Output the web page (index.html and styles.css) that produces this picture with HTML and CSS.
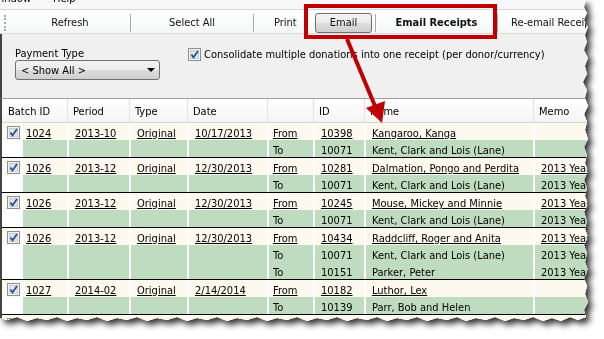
FILE: index.html
```html
<!DOCTYPE html>
<html lang="en">
<head>
    <meta charset="UTF-8">
    <title>Email Receipts</title>
    <link rel="stylesheet" href="styles.css">
</head>
<body>
    <div class="shot">
        <div class="sheet">
            <div class="menubar"><span class="menu-item first">Window</span><span class="menu-item">Help</span></div>

            <div class="toolbar">
                <span class="grip"></span>
                <span class="tool w-refresh">Refresh</span><span class="sep"></span>
                <span class="tool w-select">Select All</span><span class="sep"></span>
                <span class="tool w-print">Print</span>
                <span class="tool-btn">Email</span><span class="sep sep-gap"></span>
                <span class="tool w-receipts">Email Receipts</span><span class="sep"></span>
                <span class="tool w-reemail">Re-email Receipts</span>
            </div>

            <div class="options">
                <div class="filter">
                    <div class="label">Payment Type</div>
                    <div class="select"><span>&lt; Show All &gt;</span><span class="caret"></span></div>
                </div>
                <label class="consolidate">
                    <span class="check"><svg width="13" height="13" viewBox="0 0 13 13"><rect x="0.5" y="0.5" width="12" height="12" fill="#f4f4f4" stroke="#8e8f8f"/><rect x="2.5" y="2.5" width="8" height="8" fill="#dfe6ee" stroke="#c5ccd4"/><path d="M3.5 6.5 L5.5 9.5 L10 3" fill="none" stroke="#2a4f96" stroke-width="1.8"/></svg></span>
                    Consolidate multiple donations into one receipt (per donor/currency)
                </label>
            </div>

            <div class="grid">
                <div class="row head">
                    <div class="cell span2">Batch ID</div>
                    <div class="cell">Period</div>
                    <div class="cell">Type</div>
                    <div class="cell">Date</div>
                    <div class="cell"></div>
                    <div class="cell">ID</div>
                    <div class="cell">Name</div>
                    <div class="cell">Memo</div>
                </div>

                <!-- batch 1024 -->
                <div class="group">
                    <div class="row from">
                        <div class="cell chk"><span class="check"><svg width="13" height="13" viewBox="0 0 13 13"><rect x="0.5" y="0.5" width="12" height="12" fill="#f4f4f4" stroke="#8e8f8f"/><rect x="2.5" y="2.5" width="8" height="8" fill="#dfe6ee" stroke="#c5ccd4"/><path d="M3.5 6.5 L5.5 9.5 L10 3" fill="none" stroke="#2a4f96" stroke-width="1.8"/></svg></span></div>
                        <div class="cell batch"><u>1024</u></div>
                        <div class="cell"><u>2013-10</u></div>
                        <div class="cell"><u>Original</u></div>
                        <div class="cell"><u>10/17/2013</u></div>
                        <div class="cell dir"><u>From</u></div>
                        <div class="cell"><u>10398</u></div>
                        <div class="cell"><u>Kangaroo, Kanga</u></div>
                        <div class="cell"></div>
                    </div>
                    <div class="row to">
                        <div class="cell chk"></div><div class="cell"></div><div class="cell"></div><div class="cell"></div><div class="cell"></div>
                        <div class="cell dir">To</div>
                        <div class="cell">10071</div>
                        <div class="cell">Kent, Clark and Lois (Lane)</div>
                        <div class="cell"></div>
                    </div>
                </div>

                <!-- batch 1026 / Dalmation -->
                <div class="group">
                    <div class="row from">
                        <div class="cell chk"><span class="check"><svg width="13" height="13" viewBox="0 0 13 13"><rect x="0.5" y="0.5" width="12" height="12" fill="#f4f4f4" stroke="#8e8f8f"/><rect x="2.5" y="2.5" width="8" height="8" fill="#dfe6ee" stroke="#c5ccd4"/><path d="M3.5 6.5 L5.5 9.5 L10 3" fill="none" stroke="#2a4f96" stroke-width="1.8"/></svg></span></div>
                        <div class="cell batch"><u>1026</u></div>
                        <div class="cell"><u>2013-12</u></div>
                        <div class="cell"><u>Original</u></div>
                        <div class="cell"><u>12/30/2013</u></div>
                        <div class="cell dir"><u>From</u></div>
                        <div class="cell"><u>10281</u></div>
                        <div class="cell"><u>Dalmation, Pongo and Perdita</u></div>
                        <div class="cell"><u>2013 Year End Receipt</u></div>
                    </div>
                    <div class="row to">
                        <div class="cell chk"></div><div class="cell"></div><div class="cell"></div><div class="cell"></div><div class="cell"></div>
                        <div class="cell dir">To</div>
                        <div class="cell">10071</div>
                        <div class="cell">Kent, Clark and Lois (Lane)</div>
                        <div class="cell">2013 Year End Receipt</div>
                    </div>
                </div>

                <!-- batch 1026 / Mouse -->
                <div class="group">
                    <div class="row from">
                        <div class="cell chk"><span class="check"><svg width="13" height="13" viewBox="0 0 13 13"><rect x="0.5" y="0.5" width="12" height="12" fill="#f4f4f4" stroke="#8e8f8f"/><rect x="2.5" y="2.5" width="8" height="8" fill="#dfe6ee" stroke="#c5ccd4"/><path d="M3.5 6.5 L5.5 9.5 L10 3" fill="none" stroke="#2a4f96" stroke-width="1.8"/></svg></span></div>
                        <div class="cell batch"><u>1026</u></div>
                        <div class="cell"><u>2013-12</u></div>
                        <div class="cell"><u>Original</u></div>
                        <div class="cell"><u>12/30/2013</u></div>
                        <div class="cell dir"><u>From</u></div>
                        <div class="cell"><u>10245</u></div>
                        <div class="cell"><u>Mouse, Mickey and Minnie</u></div>
                        <div class="cell"><u>2013 Year End Receipt</u></div>
                    </div>
                    <div class="row to">
                        <div class="cell chk"></div><div class="cell"></div><div class="cell"></div><div class="cell"></div><div class="cell"></div>
                        <div class="cell dir">To</div>
                        <div class="cell">10071</div>
                        <div class="cell">Kent, Clark and Lois (Lane)</div>
                        <div class="cell">2013 Year End Receipt</div>
                    </div>
                </div>

                <!-- batch 1026 / Raddcliff -->
                <div class="group">
                    <div class="row from">
                        <div class="cell chk"><span class="check"><svg width="13" height="13" viewBox="0 0 13 13"><rect x="0.5" y="0.5" width="12" height="12" fill="#f4f4f4" stroke="#8e8f8f"/><rect x="2.5" y="2.5" width="8" height="8" fill="#dfe6ee" stroke="#c5ccd4"/><path d="M3.5 6.5 L5.5 9.5 L10 3" fill="none" stroke="#2a4f96" stroke-width="1.8"/></svg></span></div>
                        <div class="cell batch"><u>1026</u></div>
                        <div class="cell"><u>2013-12</u></div>
                        <div class="cell"><u>Original</u></div>
                        <div class="cell"><u>12/30/2013</u></div>
                        <div class="cell dir"><u>From</u></div>
                        <div class="cell"><u>10434</u></div>
                        <div class="cell"><u>Raddcliff, Roger and Anita</u></div>
                        <div class="cell"><u>2013 Year End Receipt</u></div>
                    </div>
                    <div class="row to">
                        <div class="cell chk"></div><div class="cell"></div><div class="cell"></div><div class="cell"></div><div class="cell"></div>
                        <div class="cell dir">To</div>
                        <div class="cell">10071</div>
                        <div class="cell">Kent, Clark and Lois (Lane)</div>
                        <div class="cell">2013 Year End Receipt</div>
                    </div>
                    <div class="row to">
                        <div class="cell chk"></div><div class="cell"></div><div class="cell"></div><div class="cell"></div><div class="cell"></div>
                        <div class="cell dir">To</div>
                        <div class="cell">10151</div>
                        <div class="cell">Parker, Peter</div>
                        <div class="cell">2013 Year End Receipt</div>
                    </div>
                </div>

                <!-- batch 1027 / Luthor -->
                <div class="group">
                    <div class="row from">
                        <div class="cell chk"><span class="check"><svg width="13" height="13" viewBox="0 0 13 13"><rect x="0.5" y="0.5" width="12" height="12" fill="#f4f4f4" stroke="#8e8f8f"/><rect x="2.5" y="2.5" width="8" height="8" fill="#dfe6ee" stroke="#c5ccd4"/><path d="M3.5 6.5 L5.5 9.5 L10 3" fill="none" stroke="#2a4f96" stroke-width="1.8"/></svg></span></div>
                        <div class="cell batch"><u>1027</u></div>
                        <div class="cell"><u>2014-02</u></div>
                        <div class="cell"><u>Original</u></div>
                        <div class="cell"><u>2/14/2014</u></div>
                        <div class="cell dir"><u>From</u></div>
                        <div class="cell"><u>10182</u></div>
                        <div class="cell"><u>Luthor, Lex</u></div>
                        <div class="cell"></div>
                    </div>
                    <div class="row to">
                        <div class="cell chk"></div><div class="cell"></div><div class="cell"></div><div class="cell"></div><div class="cell"></div>
                        <div class="cell dir">To</div>
                        <div class="cell">10139</div>
                        <div class="cell">Parr, Bob and Helen</div>
                        <div class="cell"></div>
                    </div>
                </div>

                <!-- batch 1027 / Kent (cut off) -->
                <div class="group">
                    <div class="row from">
                        <div class="cell chk"><span class="check"><svg width="13" height="13" viewBox="0 0 13 13"><rect x="0.5" y="0.5" width="12" height="12" fill="#f4f4f4" stroke="#8e8f8f"/><rect x="2.5" y="2.5" width="8" height="8" fill="#dfe6ee" stroke="#c5ccd4"/><path d="M3.5 6.5 L5.5 9.5 L10 3" fill="none" stroke="#2a4f96" stroke-width="1.8"/></svg></span></div>
                        <div class="cell batch"><u>1027</u></div>
                        <div class="cell"><u>2014-02</u></div>
                        <div class="cell"><u>Original</u></div>
                        <div class="cell"><u>2/14/2014</u></div>
                        <div class="cell dir"><u>From</u></div>
                        <div class="cell"><u>10181</u></div>
                        <div class="cell"><u>Kent, Jonathan and Martha</u></div>
                        <div class="cell"></div>
                    </div>
                </div>
            </div>
        </div>

        <!-- annotation -->
        <div class="callout"></div>
        <svg class="arrow" width="604" height="339" viewBox="0 0 604 339">
            <line x1="347" y1="39" x2="375" y2="106" stroke="#c00000" stroke-width="4"/>
            <polygon points="382,123 366,108 385,101" fill="#c00000"/>
        </svg>
    </div>
</body>
</html>
```

FILE: styles.css
```css
/* page */
body {
    margin: 0;
    background: #fff;
    font-family: "DejaVu Sans Condensed", "Liberation Sans", sans-serif;
    font-size: 11px;
    color: #000;
}

.shot {
    position: relative;
    width: 604px;
    height: 339px;
    overflow: hidden;
    filter: drop-shadow(4px 4px 3px rgba(0, 0, 0, 0.8));
}

/* torn screenshot edges */
.sheet {
    width: 592px;
    height: 324px;
    overflow: hidden;
    background: #f0f0f0;
    clip-path: polygon(0 0, 586px 0, 584px 7px, 587px 13px, 584px 20px, 588px 27px, 585px 35px, 587px 42px, 584px 50px, 588px 58px, 585px 66px, 587px 74px, 583px 82px, 587px 90px, 585px 98px, 588px 106px, 584px 114px, 587px 122px, 585px 130px, 588px 139px, 584px 147px, 587px 155px, 585px 163px, 588px 171px, 584px 180px, 587px 188px, 585px 196px, 588px 204px, 584px 212px, 587px 221px, 585px 229px, 588px 237px, 584px 245px, 587px 253px, 585px 262px, 588px 270px, 584px 278px, 587px 286px, 585px 294px, 588px 302px, 584px 310px, 586px 317px, 578px 320px, 570px 317px, 561px 321px, 552px 318px, 543px 321px, 533px 317px, 524px 320px, 514px 318px, 505px 321px, 495px 317px, 486px 320px, 476px 318px, 466px 321px, 457px 317px, 447px 320px, 437px 318px, 427px 321px, 417px 317px, 407px 320px, 397px 318px, 387px 321px, 377px 317px, 367px 320px, 357px 318px, 347px 321px, 337px 317px, 327px 320px, 317px 318px, 307px 321px, 297px 317px, 287px 320px, 277px 318px, 267px 321px, 257px 317px, 247px 320px, 237px 318px, 227px 321px, 217px 317px, 207px 320px, 197px 318px, 187px 321px, 177px 317px, 167px 320px, 157px 318px, 147px 321px, 137px 317px, 127px 320px, 117px 318px, 107px 321px, 97px 317px, 87px 320px, 77px 318px, 67px 321px, 57px 317px, 47px 320px, 37px 318px, 27px 321px, 17px 317px, 7px 320px, 0 318px);
}

/* menu strip, only its lower edge shows */
.menubar {
    height: 9px;
    overflow: hidden;
    background: #f7f8fa;
    white-space: nowrap;
}

.menu-item {
    display: inline-block;
    margin-top: -8px;
    line-height: 13px;
    vertical-align: top;
}

.menu-item.first {
    margin-left: -8px;
    margin-right: 22px;
}

/* toolbar */
.toolbar {
    display: flex;
    align-items: center;
    height: 25px;
    box-sizing: border-box;
    padding: 2px 0 0 4px;
    background: linear-gradient(#ffffff, #f5f6f8);
    border-top: 1px solid #d6d6d6;
    border-bottom: 1px solid #dcdcdc;
    white-space: nowrap;
    color: #111;
}

.toolbar > * {
    flex-shrink: 0;
}

.grip {
    width: 0;
    height: 16px;
    border-left: 2px dotted #a8a8a8;
    margin-right: 4px;
}

.tool {
    text-align: center;
}

.w-refresh { width: 120px; }
.w-select { width: 122px; }
.w-print { width: 61px; padding-left: 20px; text-align: left; box-sizing: border-box; }
.w-receipts { width: 121px; font-weight: bold; }
.w-reemail { padding-left: 13px; }

.sep {
    width: 1px;
    height: 18px;
    background: #a9a9a9;
    box-shadow: 1px 0 0 #fff;
}

.sep-gap {
    margin-left: 3px;
}

.tool-btn {
    width: 57px;
    height: 20px;
    box-sizing: border-box;
    border: 1px solid #707070;
    border-radius: 3px;
    background: linear-gradient(#f2f2f2 0%, #ebebeb 50%, #dddddd 51%, #cfcfcf 100%);
    text-align: center;
    line-height: 18px;
}

/* filter panel */
.options {
    display: flex;
    height: 64px;
    box-sizing: border-box;
    padding: 13px 0 0 13px;
    border-left: 2px solid #454545;
    background: #f0f0f0;
}

.filter {
    width: 145px;
}

.label {
    line-height: 13px;
}

.select {
    display: flex;
    justify-content: space-between;
    align-items: center;
    height: 20px;
    padding: 0 4px 0 5px;
    box-sizing: border-box;
    border: 1px solid #707070;
    border-radius: 3px;
    background: linear-gradient(#f2f2f2 0%, #ebebeb 50%, #dddddd 51%, #cfcfcf 100%);
}

.caret {
    width: 0;
    height: 0;
    border-left: 4px solid transparent;
    border-right: 4px solid transparent;
    border-top: 4px solid #000;
}

.consolidate {
    display: flex;
    align-items: center;
    gap: 3px;
    height: 13px;
    margin: 1px 0 0 28px;
    white-space: nowrap;
}

.check {
    display: inline-block;
    width: 13px;
    height: 13px;
}

.check svg {
    display: block;
}

/* grid */
.grid {
    border-left: 2px solid #454545;
    border-top: 1px solid #a0a0a0;
    background: #fff;
}

.row {
    display: grid;
    grid-template-columns: 19px 44px 60px 56px 78px 44px 49px 167px 150px;
    column-gap: 2px;
    height: 17px;
    line-height: 17px;
    white-space: nowrap;
}

.cell {
    overflow: hidden;
    padding-left: 6px;
    padding-top: 2px;
    box-sizing: border-box;
}

.row.head {
    height: 23px;
    line-height: 23px;
    column-gap: 1px;
    grid-template-columns: 65px 61px 57px 79px 45px 50px 168px 150px;
    background: #e2e2e2;
    border-bottom: 1px solid #d5d5d5;
}

.row.head .cell {
    background: linear-gradient(#ffffff, #f4f4f4);
    padding-left: 5px;
    padding-top: 1px;
}

.row.head .span2 {
    padding-left: 6px;
}

.row.from .cell {
    background: #fdf9ef;
}

.row.to .cell {
    background: #c0dcc0;
}

.row .cell.chk {
    padding: 0 0 0 5px;
    background: #fff;
}

.row.from .cell.chk {
    background: #fdf9ef;
}

.chk .check {
    margin-top: 3px;
    vertical-align: top;
}

.cell.batch { padding-left: 3px; }
.cell.dir { padding-left: 4px; }

.group {
    border-bottom: 1px solid #000;
}

/* red annotation */
.callout {
    position: absolute;
    left: 304px;
    top: 4px;
    width: 185px;
    height: 27px;
    border: 4px solid #c00000;
}

.arrow {
    position: absolute;
    left: 0;
    top: 0;
}
```
